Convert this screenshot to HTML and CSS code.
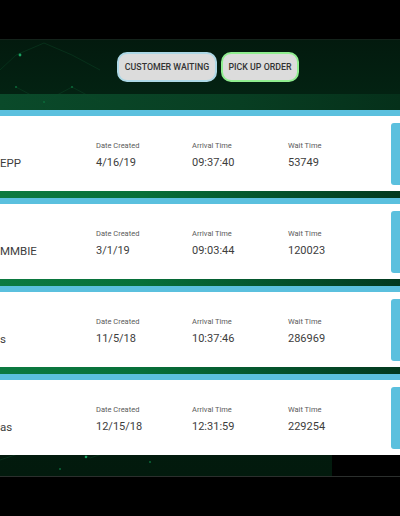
FILE: index.html
```html
<!DOCTYPE html>
<html>
<head>
<meta charset="utf-8">
<link rel="stylesheet" href="styles.css">
</head>
<body>
<div class="top"></div>
<div class="stage">
  <svg class="net" width="400" height="437" viewBox="0 0 400 437">
    <g stroke="#0b4a2a" stroke-width="0.6" fill="none" opacity="0.7">
      <path d="M16 15 L0 30 M16 15 L44 3 M16 47 L44 62 L72 47 M44 62 L44 92 M72 47 L100 62 M100 30 L72 15 M44 3 L72 15"/>
      <path d="M0 420 L60 400 L90 418 L130 405 L180 398"/>
    </g>
    <g fill="#1aa060">
      <circle cx="20" cy="15" r="1.4"/>
      <circle cx="86" cy="417" r="1.3"/>
    </g>
    <g fill="#0b6a3a">
      <circle cx="16" cy="47" r="1"/>
      <circle cx="44" cy="62" r="1"/>
      <circle cx="72" cy="47" r="1"/>
      <circle cx="44" cy="92" r="1"/>
      <circle cx="150" cy="422" r="1"/>
      <circle cx="126" cy="404" r="1"/>
      <circle cx="60" cy="429" r="1"/>
    </g>
  </svg>
  <div class="actions">
    <button class="btn btn-wait">CUSTOMER WAITING</button>
    <button class="btn btn-pick">PICK UP ORDER</button>
  </div>
  <div class="band"></div>
  <div class="list">
    <div class="order">
      <div class="fields">
        <div class="name">EPP</div>
        <div class="label c2">Date Created</div><div class="value c2">4/16/19</div>
        <div class="label c3">Arrival Time</div><div class="value c3">09:37:40</div>
        <div class="label c4">Wait Time</div><div class="value c4">53749</div>
      </div>
      <div class="go"></div>
    </div>
    <div class="order">
      <div class="fields">
        <div class="name">MMBIE</div>
        <div class="label c2">Date Created</div><div class="value c2">3/1/19</div>
        <div class="label c3">Arrival Time</div><div class="value c3">09:03:44</div>
        <div class="label c4">Wait Time</div><div class="value c4">120023</div>
      </div>
      <div class="go"></div>
    </div>
    <div class="order">
      <div class="fields">
        <div class="name">s</div>
        <div class="label c2">Date Created</div><div class="value c2">11/5/18</div>
        <div class="label c3">Arrival Time</div><div class="value c3">10:37:46</div>
        <div class="label c4">Wait Time</div><div class="value c4">286969</div>
      </div>
      <div class="go"></div>
    </div>
    <div class="order">
      <div class="fields">
        <div class="name">as</div>
        <div class="label c2">Date Created</div><div class="value c2">12/15/18</div>
        <div class="label c3">Arrival Time</div><div class="value c3">12:31:59</div>
        <div class="label c4">Wait Time</div><div class="value c4">229254</div>
      </div>
      <div class="go"></div>
    </div>
  </div>
  <div class="tail"></div>
</div>
</body>
</html>
```

FILE: styles.css
```css
html, body {
  margin: 0;
  padding: 0;
  background: #000;
  overflow: hidden;
}
body {
  width: 400px;
  height: 516px;
  font-family: Roboto, "Liberation Sans", sans-serif;
}
.top {
  height: 39px;
  background: #000;
}
.stage {
  position: relative;
  height: 436px;
  border-top: 1px solid #14231b;
  border-bottom: 1px solid #2b2f2d;
  background: linear-gradient(180deg, #031a0e 0%, #032212 12%, #021a0d 100%);
  display: flex;
  flex-direction: column;
}
.net {
  position: absolute;
  left: 0;
  top: 0;
  pointer-events: none;
}
.actions {
  position: relative;
  display: flex;
  justify-content: flex-start;
  gap: 4px;
  padding: 12px 0 0 117px;
  height: 30px;
}
.btn {
  box-sizing: border-box;
  height: 30px;
  padding: 0;
  border-radius: 10px;
  background: #dcdcdc;
  font-family: Roboto, "Liberation Sans", sans-serif;
  font-size: 8.8px;
  font-weight: 500;
  color: #333;
  white-space: nowrap;
  text-align: center;
  cursor: pointer;
}
.btn-wait {
  width: 100px;
  border: 2px solid #add8e6;
}
.btn-pick {
  width: 78px;
  border: 2.5px solid #90ee90;
}
.band {
  margin-top: 12px;
  height: 16px;
  background: linear-gradient(90deg, #0a4a2a 0%, #083e22 60%, #05301a 100%);
}
.list {
  position: relative;
  background: linear-gradient(90deg, #0c7a40 0%, #077039 35%, #04522b 70%, #02391f 100%);
}
.order {
  display: flex;
  height: 75px;
  border-top: 6px solid #5bc0de;
  background: #fff;
  margin-bottom: 7px;
}
.order:last-child {
  margin-bottom: 0;
}
.fields {
  flex: 1;
  display: grid;
  grid-template-columns: 96px 96px 96px 1fr;
  grid-template-rows: 10px 14px;
  row-gap: 5px;
  align-content: center;
  padding-top: 3px;
}
.label {
  grid-row: 1;
  font-size: 7.5px;
  line-height: 10px;
  color: #5a5a5a;
}
.value {
  grid-row: 2;
  font-size: 11px;
  line-height: 14px;
  color: #3d3d3d;
}
.name {
  grid-row: 2;
  grid-column: 1;
  font-size: 11.5px;
  line-height: 14px;
  color: #3d3d3d;
}
.c2 { grid-column: 2; }
.c3 { grid-column: 3; }
.c4 { grid-column: 4; }
.go {
  width: 9px;
  margin: 7px 0 6px;
  border-radius: 3px 0 0 3px;
  background: #5bc0de;
}
.tail {
  flex: 1;
  position: relative;
  background: linear-gradient(90deg, transparent 332px, #000 332px);
}
```
